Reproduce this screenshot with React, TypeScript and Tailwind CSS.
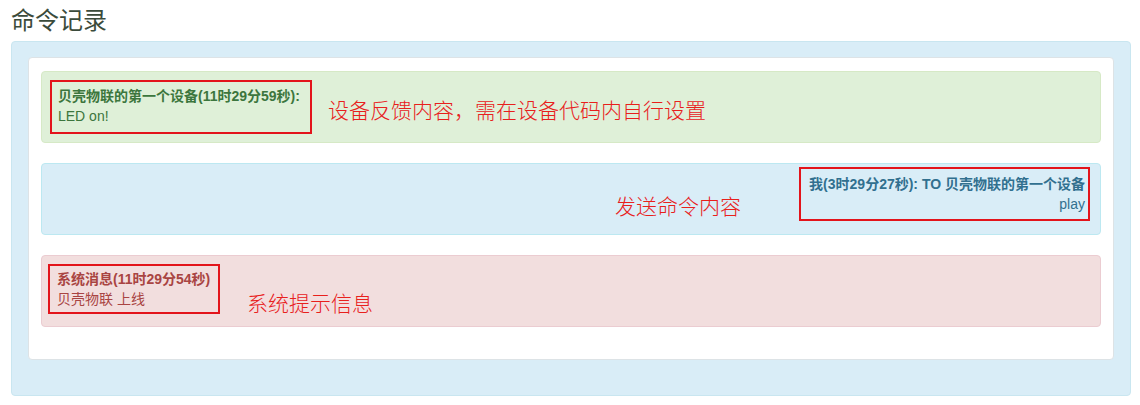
const FONT = "font-['Liberation_Sans','Noto_Sans_CJK_SC',sans-serif]";

function Note({ text, className }: { text: string; className: string }) {
  return (
    <span
      className={`absolute whitespace-nowrap text-[21px] leading-none font-light text-[#e8201c] font-['Noto_Sans_CJK_SC',sans-serif] ${className}`}
    >
      {text}
    </span>
  );
}

export default function App() {
  return (
    <div className={`w-[1140px] h-[405px] bg-white ${FONT}`}>
      <h3 className="pl-[11px] text-[24px] leading-[38px] text-[#3b4b3b] font-normal font-['Noto_Sans_CJK_SC',sans-serif]">
        命令记录
      </h3>
      <div className="mt-[3px] ml-[11px] w-[1120px] h-[355px] rounded-[4px] border border-[#c9e6f0] bg-[#d9edf7] px-[16px] pt-[15px]">
        <div className="rounded-[4px] border border-[#dde3e6] bg-white px-[12px] pt-[13px] pb-[32px] flex flex-col gap-[20px]">
          {/* device feedback */}
          <div className="relative h-[72px] rounded-[4px] border border-[#d6e9c6] bg-[#dff0d8] text-[#3c763d] pl-[8px] pt-[8px]">
            <div className="inline-block border-2 border-[#e3141b] pl-[6px] pr-[10px] pt-[4px] pb-[5px] text-[14px] leading-[20px]">
              <div className="font-bold">贝壳物联的第一个设备(11时29分59秒):</div>
              <div className="leading-[21px]">LED on!</div>
            </div>
            <Note text="设备反馈内容，需在设备代码内自行设置" className="left-[286px] top-[27px]" />
          </div>

          {/* sent command */}
          <div className="relative h-[72px] rounded-[4px] border border-[#bce8f1] bg-[#d9edf7] text-[#31708f] pr-[10px] pt-[3px] flex justify-end items-start">
            <div className="border-2 border-[#e3141b] pl-[8px] pr-[3px] py-[5px] text-[14px] leading-[20px] text-right">
              <div className="font-bold">我(3时29分27秒): TO 贝壳物联的第一个设备</div>
              <div>play</div>
            </div>
            <Note text="发送命令内容" className="left-[573px] top-[31px]" />
          </div>

          {/* system message */}
          <div className="relative h-[72px] rounded-[4px] border border-[#ebccd1] bg-[#f2dede] text-[#a94442] pl-[6px] pt-[8px]">
            <div className="inline-block border-2 border-[#e3141b] pl-[7px] pr-[8px] py-[3px] text-[14px] leading-[20px]">
              <div className="font-bold">系统消息(11时29分54秒)</div>
              <div>贝壳物联 上线</div>
            </div>
            <Note text="系统提示信息" className="left-[205px] top-[36px]" />
          </div>
        </div>
      </div>
    </div>
  );
}
